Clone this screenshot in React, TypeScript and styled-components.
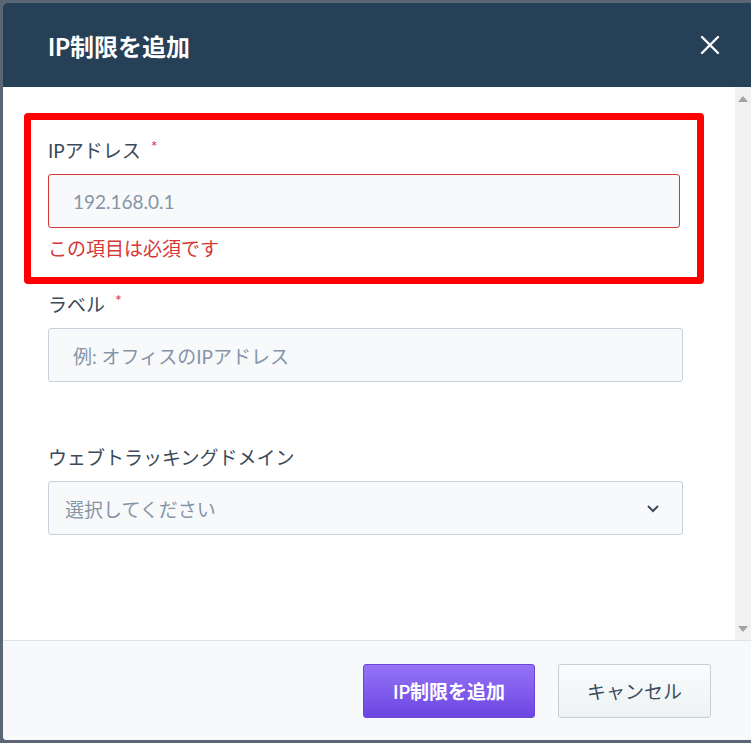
import React from 'react';
import styled, { createGlobalStyle } from 'styled-components';

const Global = createGlobalStyle`
  html, body { margin: 0; padding: 0; background: #5a6673; }
  body { font-family: Lato, "Noto Sans CJK JP", sans-serif; }
  * { box-sizing: border-box; }
`;

const Page = styled.div`
  width: 751px;
  height: 743px;
  padding: 3px 0 3px 3px;
`;

const Dialog = styled.div`
  height: 737px;
  background: #fff;
  display: flex;
  flex-direction: column;
  border-radius: 4px 0 0 4px;
  overflow: hidden;
`;

const Header = styled.div`
  height: 84px;
  flex: none;
  background: #264057;
  display: flex;
  align-items: center;
  justify-content: space-between;
  padding: 0 30px 0 45px;
`;

const Title = styled.h2`
  margin: 0;
  color: #fff;
  font-size: 24px;
  font-weight: 700;
`;

const Close = styled.button`
  background: none;
  border: 0;
  padding: 0;
  display: flex;
  cursor: pointer;
`;

const BodyWrap = styled.div`
  flex: 1;
  display: flex;
  min-height: 0;
`;

const Body = styled.div`
  flex: 1;
  padding: 26px 29px 0 21px;
  display: flex;
  flex-direction: column;
`;

const Scrollbar = styled.div`
  width: 16px;
  background: #f1f1f1;
  display: flex;
  flex-direction: column;
  justify-content: space-between;
  align-items: center;
  padding: 9px 0 8px;
`;

const Arrow = styled.div<{ $up?: boolean }>`
  width: 0;
  height: 0;
  border-left: 5px solid transparent;
  border-right: 5px solid transparent;
  ${(p) => (p.$up ? 'border-bottom: 6px solid #a3a3a3;' : 'border-top: 6px solid #a3a3a3;')}
`;

const Highlight = styled.div`
  border: 7px solid #ff0000;
  border-radius: 4px;
  padding: 16px 17px 16px 17px;
  width: 680px;
`;

const Field = styled.div<{ $gap?: number }>`
  padding: 0 0 0 24px;
  margin-top: ${(p) => p.$gap ?? 0}px;
  width: 659px;
`;

const Label = styled.div`
  font-size: 19px;
  color: #3a4a5a;
  height: 26px;
  margin-bottom: 12px;
`;

const Star = styled.span`
  color: #d3302f;
  margin-left: 10px;
  font-size: 16px;
  vertical-align: top;
`;

const Input = styled.div<{ $error?: boolean }>`
  height: 54px;
  border: 1px solid ${(p) => (p.$error ? '#d53636' : '#c8d2dc')};
  border-radius: 3px;
  background: #f8f9fb;
  display: flex;
  align-items: center;
  justify-content: space-between;
  padding: 0 24px;
  font-size: 19px;
  color: #8595a6;
`;

const Select = styled(Input)`
  padding: 0 22px 0 16px;
`;

const ErrorText = styled.div`
  color: #d53636;
  font-size: 19px;
  margin-top: 6px;
`;

const Footer = styled.div`
  height: 100px;
  flex: none;
  border-top: 1px solid #dde3ea;
  background: #f8f9fb;
  display: flex;
  justify-content: flex-end;
  align-items: center;
  gap: 23px;
  padding: 0 40px 0 0;
`;

const Button = styled.button<{ $primary?: boolean }>`
  height: 54px;
  border-radius: 3px;
  font-family: inherit;
  font-size: 19px;
  padding: 0 24px;
  ${(p) =>
    p.$primary
      ? `background: linear-gradient(#9574f6, #6c45e2); color: #fff; border: 1px solid #6a45d8; width: 172px; font-weight: 600;`
      : `background: linear-gradient(#fafcfc, #edf2f4); color: #3a4e60; border: 1px solid #c3ced6; width: 153px;`}
`;

export default function App() {
  return (
    <Page>
      <Global />
      <Dialog>
        <Header>
          <Title>IP制限を追加</Title>
          <Close aria-label="close">
            <svg width="22" height="22" viewBox="0 0 22 22" stroke="#fff" strokeWidth="2.4" strokeLinecap="round">
              <path d="M3 3l16 16M19 3L3 19" />
            </svg>
          </Close>
        </Header>
        <BodyWrap>
          <Body>
            <Highlight>
              <Label>
                IPアドレス<Star>*</Star>
              </Label>
              <Input $error>192.168.0.1</Input>
              <ErrorText>この項目は必須です</ErrorText>
            </Highlight>
            <Field $gap={6}>
              <Label>
                ラベル<Star>*</Star>
              </Label>
              <Input>例: オフィスのIPアドレス</Input>
            </Field>
            <Field $gap={61}>
              <Label>ウェブトラッキングドメイン</Label>
              <Select>
                選択してください
                <svg width="14" height="10" viewBox="0 0 14 10" fill="none" stroke="#3a4a5a" strokeWidth="2">
                  <path d="M2 3l5 5 5-5" />
                </svg>
              </Select>
            </Field>
          </Body>
          <Scrollbar>
            <Arrow $up />
            <Arrow />
          </Scrollbar>
        </BodyWrap>
        <Footer>
          <Button $primary>IP制限を追加</Button>
          <Button>キャンセル</Button>
        </Footer>
      </Dialog>
    </Page>
  );
}
